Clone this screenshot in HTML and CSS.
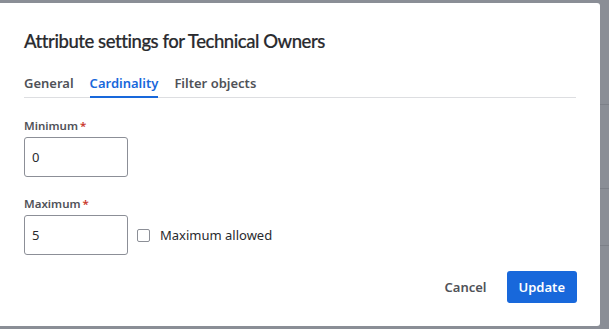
FILE: index.html
```html
<!DOCTYPE html>
<html lang="en">
<head>
    <meta charset="UTF-8">
    <title>Attribute settings</title>
    <link rel="stylesheet" href="styles.css">
</head>
<body>
    <div class="dialog">
        <h1 class="title">Attribute settings for Technical Owners</h1>

        <div class="tabs">
            <span class="tab">General</span>
            <span class="tab active">Cardinality</span>
            <span class="tab">Filter objects</span>
        </div>

        <div class="field">
            <label class="label">Minimum<span class="req">*</span></label>
            <input class="num" type="text" value="0">
        </div>

        <div class="field">
            <label class="label">Maximum<span class="req">*</span></label>
            <div class="row">
                <input class="num" type="text" value="5">
                <label class="check"><span class="box"></span>Maximum allowed</label>
            </div>
        </div>

        <div class="footer">
            <button class="btn subtle">Cancel</button>
            <button class="btn primary">Update</button>
        </div>
    </div>
</body>
</html>
```

FILE: styles.css
```css
body {
    margin: 0;
    height: 329px;
    overflow: hidden;
    font-family: "Noto Sans", Arial, sans-serif;
    color: #292a2e;
    background:
        linear-gradient(#7c8088, #7c8088) 600px 104px / 9px 1px no-repeat,
        linear-gradient(#7c8088, #7c8088) 600px 188px / 9px 1px no-repeat,
        linear-gradient(#7c8088, #7c8088) 600px 245px / 9px 1px no-repeat,
        #8a8e96;
}
.dialog {
    box-sizing: border-box;
    width: 600px;
    height: 323px;
    margin-top: 3px;
    padding: 24px;
    background: #fff;
    border-radius: 0 3px 3px 0;
}
.title {
    margin: 0;
    font-family: Lato, "Noto Sans", sans-serif;
    font-size: 18.5px;
    font-weight: 500;
    line-height: 28px;
    letter-spacing: -0.45px;
    -webkit-text-stroke: 0.2px #292a2e;
}
.tabs {
    display: flex;
    gap: 16px;
    margin-top: 18px;
    border-bottom: 1px solid #dddee1;
}
.tab {
    position: relative;
    font-size: 13px;
    font-weight: 600;
    line-height: 20px;
    padding-bottom: 4px;
    color: #505258;
}
.tab.active {
    color: #1868db;
}
.tab.active::after {
    content: "";
    position: absolute;
    left: 0;
    right: 0;
    bottom: -1px;
    height: 2px;
    background: #1868db;
}
.field {
    margin-top: 20px;
}
.field + .field {
    margin-top: 19px;
}
.label {
    display: block;
    font-size: 11.5px;
    font-weight: 600;
    line-height: 16px;
    color: #505258;
    margin-bottom: 3px;
}
.req {
    color: #c9372c;
    margin-left: 2px;
}
.num {
    box-sizing: border-box;
    width: 104px;
    height: 40px;
    padding: 0 7px;
    border: 1px solid #8c8f97;
    border-radius: 3px;
    font-family: inherit;
    font-size: 13px;
    color: #292a2e;
    outline: none;
}
.row {
    display: flex;
    align-items: center;
}
.check {
    display: flex;
    align-items: center;
    gap: 10px;
    margin-left: 9px;
    font-size: 13px;
    color: #292a2e;
}
.box {
    box-sizing: border-box;
    width: 13px;
    height: 13px;
    border: 1px solid #8c8f97;
    border-radius: 2px;
}
.footer {
    display: flex;
    justify-content: flex-end;
    gap: 8px;
    margin-top: 16px;
    margin-right: -1px;
}
.btn {
    height: 32px;
    padding: 0 12px;
    border: none;
    border-radius: 3px;
    font-family: inherit;
    font-size: 13px;
    font-weight: 600;
    cursor: pointer;
}
.subtle {
    background: none;
    color: #505258;
}
.primary {
    background: #1868db;
    color: #fff;
}
```
